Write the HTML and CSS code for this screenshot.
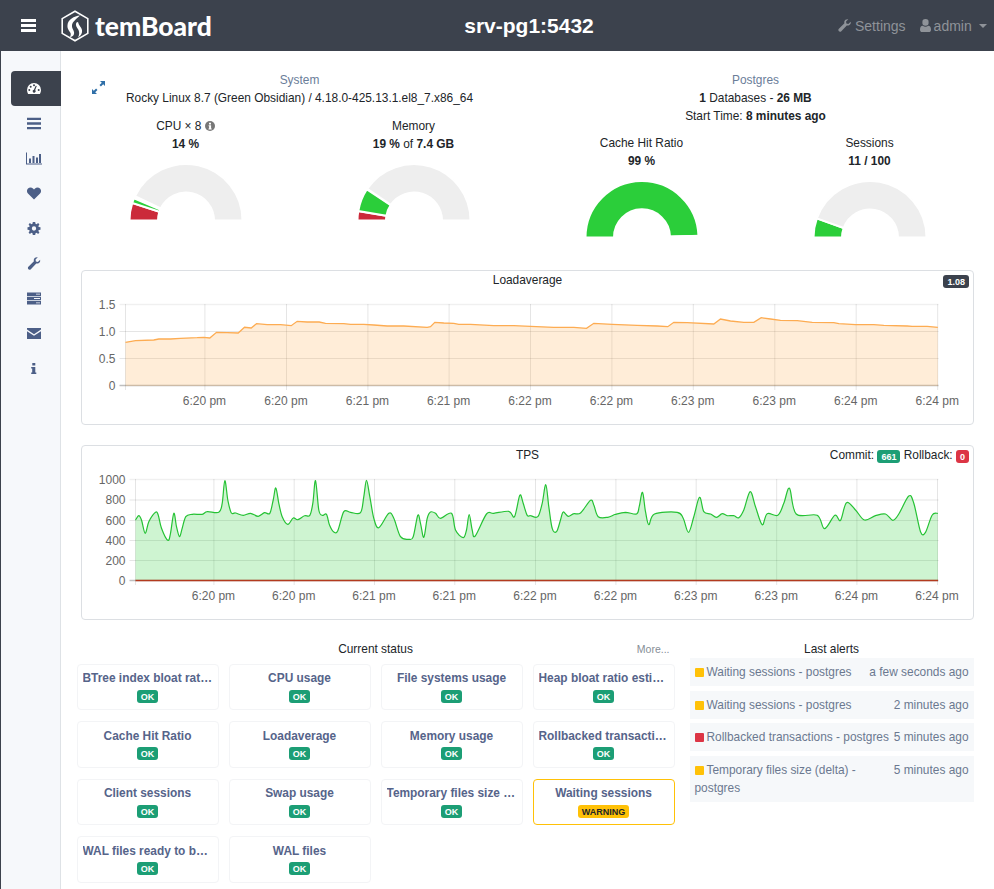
FILE: index.html
```html
<!DOCTYPE html>
<html lang="en">
<head>
  <meta charset="UTF-8">
  <title>temBoard - srv-pg1:5432</title>
  <meta name="viewport" content="width=device-width, initial-scale=1">
  <link rel="stylesheet" href="styles.css">
</head>
<body>

<nav class="navbar">
  <div class="nav-left">
    <svg class="burger" viewBox="0 0 15 13"><path d="M0 0h15v3H0zM0 5h15v3H0zM0 10h15v3H0z"/></svg>
    <svg class="logo" viewBox="0 0 28 32">
      <path class="logo-hex" d="M14 1.2 26.8 8.6v14.8L14 30.8 1.2 23.400V8.600z"/>
      <path class="logo-bird" d="M19 5.500C13 6 7 9.500 6.500 15 6 19 8.500 21 9.500 23c.5 1.500 0 3-.5 4 3 0 4.500-2.500 4-5-.5-2.500-2.500-4-2-7 .5-3 3.500-5.500 8-9.500zM15.500 12.500c-1.500 3 .5 5 2 7.500 1 2 1 5-.5 7.500 3-1.500 4.500-4.500 4-7.500-.5-3-3.500-4.500-4-8z"/>
    </svg>
    <span class="brand">temBoard</span>
  </div>
  <div class="nav-title">srv-pg1:5432</div>
  <div class="nav-right">
    <span class="nav-link">
      <svg class="nav-icon" viewBox="0 0 16 16"><use href="#i-wrench"/></svg>Settings
    </span>
    <span class="nav-link">
      <svg class="nav-icon user" viewBox="0 0 12 14"><path d="M6 0a3.400 3.400 0 0 1 3.400 3.600A3.400 3.400 0 0 1 6 7.200a3.400 3.400 0 0 1-3.400-3.600A3.400 3.400 0 0 1 6 0zM3 7.200c.8.700 1.900 1.100 3 1.100s2.200-.4 3-1.100c1.900.1 3 1.600 3 4.300 0 1.600-1 2.500-2.300 2.500H2.300C1 14 0 13.100 0 11.500c0-2.700 1.100-4.200 3-4.300z"/></svg>admin
      <i class="caret"></i>
    </span>
  </div>
</nav>

<svg class="defs" width="0" height="0">
  <symbol id="i-wrench" viewBox="0 0 16 16">
    <path d="M15.600 3.300c.3.900.2 2.200-.6 3.300-1 1.300-2.700 1.800-4.200 1.300L4.100 15c-.9.900-2.200.9-3 .1-.9-.9-.9-2.200 0-3L7.900 5.300C7.400 3.700 7.900 2.100 9.200 1 10.300.2 11.600 0 12.700.4L9.900 3.100l.4 2.400 2.400.5z"/>
  </symbol>
</svg>

<div class="layout">
  <aside class="sidebar">
    <a class="side-item active">
      <svg class="side-icon" viewBox="0 0 14 11"><path d="M7 0a7 7 0 0 1 7 7c0 1.500-.4 2.800-1.100 4H1.100C.4 9.800 0 8.500 0 7a7 7 0 0 1 7-7z"/><g class="dots"><circle cx="2.300" cy="7" r="1"/><circle cx="3.700" cy="3.700" r="1"/><circle cx="7" cy="2.300" r="1"/><circle cx="11.700" cy="7" r="1"/><path d="M9.800 3 8.200 7.100a1.500 1.500 0 1 1-1.300-.4L8.700 2.700z"/></g></svg>
    </a>
    <a class="side-item"><svg class="side-icon" viewBox="0 0 12 10"><path d="M0 0h12v2H0zM0 4h12v2H0zM0 8h12v2H0z"/></svg></a>
    <a class="side-item"><svg class="side-icon wide" viewBox="0 0 16 12"><path d="M0 0h1v11h15v1H0zM3 6h2v4.500H3zM6.500 3.500h2v7h-2zM10 5h2v5.500h-2zM13 1.500h2v9h-2z"/></svg></a>
    <a class="side-item"><svg class="side-icon" viewBox="0 0 14 12"><path d="M7 12 1.200 6.300C-.4 4.700-.4 2.300 1 1 2.400-.3 4.600-.3 6 1l1 1 1-1c1.400-1.300 3.600-1.300 5 0 1.400 1.300 1.400 3.700-.2 5.300z"/></svg></a>
    <a class="side-item"><svg class="side-icon" viewBox="0 0 12 12"><path fill-rule="evenodd" d="M4.900 0h2.200l.3 1.600 1 .4L9.800 1l1.200 1.200L10 3.600l.4 1 1.600.3v2.200l-1.600.3-.4 1 1 1.400L9.800 11l-1.400-1-1 .4L7.100 12H4.900l-.3-1.600-1-.4-1.400 1L1 9.800l1-1.400-.4-1L0 7.100V4.900l1.600-.3.4-1L1 2.200 2.200 1l1.400 1 1-.4zM6 4a2 2 0 1 0 0 4 2 2 0 0 0 0-4z"/></svg></a>
    <a class="side-item"><svg class="side-icon" viewBox="0 0 16 16"><use href="#i-wrench"/></svg></a>
    <a class="side-item"><svg class="side-icon" viewBox="0 0 14 12"><path d="M0 0h14v3.400H0zM0 4.300h14v3.400H0zM0 8.600h14V12H0z"/><path class="cut" d="M9 1.300h4v.8H9zM7 5.600h6v.8H7zM9 9.900h4v.8H9z"/></svg></a>
    <a class="side-item"><svg class="side-icon" viewBox="0 0 14 11"><path d="M0 0h14v1.600L7 6.200 0 1.600zM0 3.300l7 4.500 7-4.500V11H0z"/></svg></a>
    <a class="side-item"><svg class="side-icon" viewBox="0 0 14 11"><path d="M5.300 0h3v2.400h-3zM4.200 4h4.100v5.500h1V11H4.200V9.500h1V5.500h-1z"/></svg></a>
  </aside>

  <main class="content">
    <section class="overview">
      <div class="overview-col">
        <svg class="expand" viewBox="0 0 13 13"><path d="M8 0h5v5l-1.800-1.800-2.300 2.300-1.400-1.400 2.300-2.300zM5 13H0V8l1.800 1.800 2.300-2.300 1.400 1.400-2.300 2.300z"/></svg>
        <div class="overview-head">
          <a class="section-link">System</a>
          <div>Rocky Linux 8.7 (Green Obsidian) / 4.18.0-425.13.1.el8_7.x86_64</div>
        </div>
        <div class="gauges">
          <div class="gauge">
            <div>CPU × 8 <svg class="hint" viewBox="0 0 10 10"><circle cx="5" cy="5" r="5"/><path d="M4 1.800h2v1.600H4zM3.600 4.300h2.500v3.100h.6v1H3.500v-1h.6V5.300h-.5z"/></svg></div>
            <b>14 %</b>
            <svg class="dial" id="gauge-cpu" viewBox="0 0 228 80"></svg>
          </div>
          <div class="gauge">
            <div>Memory</div>
            <div><b>19 %</b> of <b>7.4 GB</b></div>
            <svg class="dial" id="gauge-memory" viewBox="0 0 228 80"></svg>
          </div>
        </div>
      </div>
      <div class="overview-col">
        <div class="overview-head">
          <a class="section-link">Postgres</a>
          <div><b>1</b> Databases - <b>26 MB</b></div>
          <div>Start Time: <b>8 minutes ago</b></div>
        </div>
        <div class="gauges lower">
          <div class="gauge">
            <div>Cache Hit Ratio</div>
            <b>99 %</b>
            <svg class="dial" id="gauge-cache" viewBox="0 0 228 80"></svg>
          </div>
          <div class="gauge">
            <div>Sessions</div>
            <b>11 / 100</b>
            <svg class="dial" id="gauge-sessions" viewBox="0 0 228 80"></svg>
          </div>
        </div>
      </div>
    </section>

    <section class="chart-card">
      <div class="chart-head">
        <span></span>
        <span class="chart-title">Loadaverage</span>
        <span class="chart-legend"><span class="badge dark">1.08</span></span>
      </div>
      <svg class="chart load" id="chart-load" viewBox="82 289 890 135"></svg>
    </section>

    <section class="chart-card">
      <div class="chart-head">
        <span></span>
        <span class="chart-title">TPS</span>
        <span class="chart-legend">Commit: <span class="badge ok">661</span> Rollback: <span class="badge red">0</span></span>
      </div>
      <svg class="chart tps" id="chart-tps" viewBox="82 464 890 155"></svg>
    </section>

    <section class="bottom">
      <div class="status">
        <div class="status-head">
          <span class="status-title">Current status</span>
          <a class="more">More...</a>
        </div>
        <div class="status-grid">
          <a class="check"><span class="check-name">BTree index bloat ratio estimation</span><span class="badge ok">OK</span></a>
          <a class="check"><span class="check-name">CPU usage</span><span class="badge ok">OK</span></a>
          <a class="check"><span class="check-name">File systems usage</span><span class="badge ok">OK</span></a>
          <a class="check"><span class="check-name">Heap bloat ratio estimation</span><span class="badge ok">OK</span></a>
          <a class="check"><span class="check-name">Cache Hit Ratio</span><span class="badge ok">OK</span></a>
          <a class="check"><span class="check-name">Loadaverage</span><span class="badge ok">OK</span></a>
          <a class="check"><span class="check-name">Memory usage</span><span class="badge ok">OK</span></a>
          <a class="check"><span class="check-name">Rollbacked transactions</span><span class="badge ok">OK</span></a>
          <a class="check"><span class="check-name">Client sessions</span><span class="badge ok">OK</span></a>
          <a class="check"><span class="check-name">Swap usage</span><span class="badge ok">OK</span></a>
          <a class="check"><span class="check-name">Temporary files size (delta)</span><span class="badge ok">OK</span></a>
          <a class="check warning"><span class="check-name">Waiting sessions</span><span class="badge warn">WARNING</span></a>
          <a class="check"><span class="check-name">WAL files ready to be archived</span><span class="badge ok">OK</span></a>
          <a class="check"><span class="check-name">WAL files</span><span class="badge ok">OK</span></a>
        </div>
      </div>
      <div class="alerts">
        <div class="alerts-title">Last alerts</div>
        <div class="alert"><span class="when">a few seconds ago</span><i class="square yellow"></i>Waiting sessions - postgres</div>
        <div class="alert"><span class="when">2 minutes ago</span><i class="square yellow"></i>Waiting sessions - postgres</div>
        <div class="alert"><span class="when">5 minutes ago</span><i class="square crimson"></i>Rollbacked transactions - postgres</div>
        <div class="alert"><span class="when">5 minutes ago</span><i class="square yellow"></i>Temporary files size (delta) - postgres</div>
      </div>
    </section>
  </main>
</div>

<script src="charts.js"></script>
</body>
</html>
```

FILE: styles.css
```css
* {
  box-sizing: border-box;
}

body {
  margin: 0;
  font-family: "Liberation Sans", Arial, sans-serif;
  font-size: 11.9px;
  line-height: 18px;
  color: #212529;
  background: #fff;
}

.defs {
  position: absolute;
}

/* top bar */
.navbar {
  display: flex;
  align-items: center;
  height: 51px;
  background: #3c424d;
  color: #fff;
}

.nav-left {
  display: flex;
  align-items: center;
  width: 225px;
  padding-left: 21px;
}

.burger {
  width: 15px;
  height: 13px;
  fill: #fff;
}

.logo {
  width: 28px;
  height: 32px;
  margin-left: 25px;
}

.logo-hex {
  fill: none;
  stroke: #fff;
  stroke-width: 1.6;
}

.logo-bird {
  fill: #fff;
}

.brand {
  margin-left: 6px;
  font-family: Lato, sans-serif;
  font-size: 26.400px;
  font-weight: 900;
}

.nav-title {
  flex: 1;
  text-align: center;
  font-size: 21px;
  font-weight: bold;
}

.nav-right {
  display: flex;
  width: 161px;
  padding-left: 5px;
  gap: 14px;
  font-size: 14px;
  color: #8f9399;
}

.nav-link {
  display: flex;
  align-items: center;
}

.nav-icon {
  width: 13px;
  height: 13px;
  margin-right: 4px;
  fill: #8f9399;
}

.nav-icon.user {
  width: 11px;
  margin-right: 3px;
}

.caret {
  margin-left: 7px;
  border-top: 4px solid #8f9399;
  border-left: 4px solid transparent;
  border-right: 4px solid transparent;
}

/* side menu */
.layout {
  display: flex;
  min-height: 838px;
}

.sidebar {
  flex: none;
  width: 61px;
  padding: 20px 0 0 10px;
  background: #f6f8fb;
  border-left: 1px solid #3c424d;
  border-right: 1px solid #dee2e6;
}

.side-item {
  display: flex;
  align-items: center;
  justify-content: center;
  width: 50px;
  height: 35px;
  padding-right: 4px;
  border-radius: 4px 0 0 4px;
}

.side-item.active {
  background: #3c424d;
}

.side-icon {
  width: 14px;
  height: 13px;
  fill: #4c5f87;
}

.side-icon.wide {
  width: 16px;
}

.active .side-icon {
  fill: #fff;
}

.dots {
  fill: #3c424d;
}

.cut {
  fill: #f6f8fb;
}

/* main column */
.content {
  flex: 1;
  min-width: 0;
  padding: 20px 10.5px 0;
}

.overview {
  display: grid;
  grid-template-columns: 1fr 1fr;
  margin-bottom: 20px;
}

.overview-col {
  position: relative;
  text-align: center;
}

.expand {
  position: absolute;
  left: 20px;
  top: 10px;
  width: 13px;
  height: 13px;
  fill: #2f6fa8;
}

.section-link {
  display: block;
  color: #6a7d99;
}

.gauges {
  display: grid;
  grid-template-columns: 1fr 1fr;
  margin-top: 10px;
}

.gauges.lower {
  margin-top: 9px;
}

.gauge > b {
  display: block;
}

.hint {
  width: 10px;
  height: 10px;
  vertical-align: -1px;
  fill: #777;
  fill-rule: evenodd;
}

.hint path {
  fill: #fff;
}

.dial {
  display: block;
  width: 228px;
  height: 80px;
}

.chart-card {
  margin: 0 9.5px 20px;
  border: 1px solid #dcdfe3;
  border-radius: 4px;
}

.chart-head {
  display: grid;
  grid-template-columns: 1fr auto 1fr;
  padding: 0 4px;
}

.chart-legend {
  text-align: right;
}

.chart {
  display: block;
  width: 100%;
}

.chart.load {
  height: 135px;
}

.chart.tps {
  height: 155px;
}

.chart text {
  font-size: 12px;
  fill: #666;
}

.badge {
  display: inline-block;
  padding: 0 4px;
  height: 13px;
  border-radius: 3px;
  font-size: 9px;
  line-height: 14px;
  font-weight: bold;
  color: #fff;
  vertical-align: -1px;
}

.badge.ok {
  background: #1c9e75;
}

.badge.dark {
  background: #3c424d;
}

.badge.red {
  background: #dc3545;
}

.badge.warn {
  background: #ffc107;
  color: #212529;
}

/* status checks and alerts */
.bottom {
  display: grid;
  grid-template-columns: 608px minmax(0, 1fr);
}

.status {
  min-width: 0;
  padding: 0 5px;
}

.status-head {
  position: relative;
  text-align: center;
}

.more {
  position: absolute;
  right: 5px;
  top: 0;
  font-size: 10.5px;
  color: #868e96;
}

.status-grid {
  display: grid;
  grid-template-columns: repeat(4, minmax(0, 1fr));
  column-gap: 10px;
  row-gap: 11px;
  margin-top: 5.500px;
}

.check {
  display: flex;
  flex-direction: column;
  align-items: center;
  min-width: 0;
  height: 46.500px;
  padding: 4.500px 5px 0;
  border: 1px solid #f3f4f6;
  border-radius: 4px;
}

.check.warning {
  border-color: #ffc107;
}

.check-name {
  width: 100%;
  margin-bottom: 2.500px;
  overflow: hidden;
  white-space: nowrap;
  text-overflow: ellipsis;
  text-align: center;
  font-weight: bold;
  color: #56648a;
}

.alerts {
  padding: 0 10px;
}

.alerts-title {
  text-align: center;
}

.alert {
  margin-bottom: 4.700px;
  padding: 5px;
  background: #f6f8fa;
  color: #6b7890;
}

.when {
  float: right;
}

.square {
  display: inline-block;
  width: 9px;
  height: 9px;
  margin-right: 3px;
  border-radius: 1px;
  vertical-align: -1px;
}

.square.yellow {
  background: #ffc107;
}

.square.crimson {
  background: #dc3545;
}
```

FILE: charts.js
```js
const NS = "http://www.w3.org/2000/svg";

function add(svg, tag, attrs, text) {
  const el = document.createElementNS(NS, tag);
  for (const k in attrs) el.setAttribute(k, attrs[k]);
  if (text) el.textContent = text;
  svg.appendChild(el);
}

// half doughnut, angles in degrees from the left end
function gauge(id, segments) {
  const svg = document.getElementById(id);
  const cx = 114, cy = 67.5, R = 56.5, r = 28;
  const pt = (rad, a) => {
    const t = a * Math.PI / 180;
    return (cx - rad * Math.cos(t)).toFixed(2) + " " + (cy - rad * Math.sin(t)).toFixed(2);
  };
  segments.forEach(([a0, a1, color]) => {
    const d = `M${pt(R, a0)}A${R} ${R} 0 0 1 ${pt(R, a1)}L${pt(r, a1)}A${r} ${r} 0 0 0 ${pt(r, a0)}Z`;
    add(svg, "path", { d, fill: color, stroke: "#fff", "stroke-width": 2 });
  });
}

const RED = "#cb2a3a", GREEN = "#2bce3a", GREY = "#eeeeee";
gauge("gauge-cpu", [[0, 18, RED], [18.2, 23, GREEN], [25.5, 180, GREY]]);
gauge("gauge-memory", [[0, 9.6, RED], [9.6, 33.5, GREEN], [34.2, 180, GREY]]);
gauge("gauge-cache", [[0, 178.2, GREEN], [178.2, 180, GREY]]);
gauge("gauge-sessions", [[0, 19.8, GREEN], [19.8, 180, GREY]]);

function drawAxes(svg, a) {
  const last = a.yTicks.length - 1;
  a.yTicks.forEach(([label, y], i) => {
    const stroke = i === last ? "rgba(0,0,0,.25)" : i === 0 ? "rgba(0,0,0,.06)" : "rgba(0,0,0,.1)";
    add(svg, "line", { x1: a.left - 6, x2: a.right, y1: y, y2: y, stroke, "stroke-width": i === 0 || i === last ? 1.6 : 1 });
    add(svg, "text", { x: a.labelX, y: y + 4, "text-anchor": "end" }, label);
  });
  a.xTicks.forEach(([label, x]) => {
    add(svg, "line", { x1: x, x2: x, y1: a.top, y2: a.bottom + 4, stroke: "rgba(0,0,0,.1)", "stroke-width": 1 });
    if (label) add(svg, "text", { x: x - 0.5, y: a.bottom + 19, "text-anchor": "middle" }, label);
  });
}

// smooth line through the points, like a chart with bezier tension
function smooth(p) {
  let d = `M${p[0][0]} ${p[0][1]}`;
  for (let i = 0; i < p.length - 1; i++) {
    const a = p[Math.max(i - 1, 0)], b = p[i], c = p[i + 1], e = p[Math.min(i + 2, p.length - 1)];
    const c1 = [b[0] + (c[0] - a[0]) / 6, b[1] + (c[1] - a[1]) / 6];
    const c2 = [c[0] - (e[0] - b[0]) / 6, c[1] - (e[1] - b[1]) / 6];
    d += `C${c1[0].toFixed(1)} ${c1[1].toFixed(1)} ${c2[0].toFixed(1)} ${c2[1].toFixed(1)} ${c[0].toFixed(1)} ${c[1].toFixed(1)}`;
  }
  return d;
}

function straight(p) {
  return "M" + p.map(q => q[0].toFixed(1) + " " + q[1].toFixed(1)).join("L");
}

// points were read at 3x, [x, y] from a given origin
function scale(list, ox, oy) {
  const out = [];
  for (let i = 0; i < list.length; i += 2) out.push([ox + list[i] / 3, oy + list[i + 1] / 3]);
  return out;
}

// Loadaverage
const loadPts = scale([135,232,165,227,220,225,235,222,270,222,300,220,350,218,370,217,388,219,408,202,440,203,473,204,492,187,512,189,528,176,560,179,600,179,632,182,650,169,680,171,716,171,735,175,790,176,810,178,850,178,880,180,920,183,970,183,1040,187,1050,185,1063,172,1090,174,1120,175,1135,178,1170,178,1240,182,1300,182,1350,184], 80, 265)
  .concat(scale([70,187,130,187,168,190,190,175,245,178,320,181,380,183,412,185,430,172,470,173,550,177,570,162,600,168,640,172,670,172,692,158,720,162,750,166,800,167,845,172,910,173,925,176,975,179,1030,179,1060,181,1130,183,1145,184,1190,184,1222,187], 530, 265));

const loadSvg = document.getElementById("chart-load");
drawAxes(loadSvg, {
  left: 125, right: 938, top: 304, bottom: 386, labelX: 115,
  yTicks: [["1.5", 304.5], ["1.0", 331.5], ["0.5", 358.5], ["0", 385.5]],
  xTicks: [["", 125], ["6:20 pm", 204.4], ["6:20 pm", 286], ["6:21 pm", 367.4], ["6:21 pm", 448.6], ["6:22 pm", 530], ["6:22 pm", 611.4], ["6:23 pm", 692.8], ["6:23 pm", 774.3], ["6:24 pm", 855.7], ["6:24 pm", 937.2]]
});
add(loadSvg, "path", { d: straight(loadPts) + "L937.5 386L125 386Z", fill: "rgba(253,171,78,.22)" });
add(loadSvg, "path", { d: straight(loadPts), fill: "none", stroke: "#fdac52", "stroke-width": 1.3 });

// TPS
const tpsPts = scale([165,240,175,227,183,240,194,280,205,245,225,217,233,225,243,265,262,301,270,280,280,220,288,260,297,290,305,265,316,230,335,223,365,223,380,215,415,217,425,190,433,122,442,180,452,218,465,219,488,226,510,220,533,229,552,218,568,220,578,180,586,144,595,190,605,230,622,253,638,234,652,239,672,227,688,226,697,190,705,122,715,210,725,226,738,223,747,255,760,276,772,272,790,215,810,217,840,218,850,170,858,121,868,170,880,235,895,263,925,220,940,235,960,290,985,298,998,290,1012,226,1020,250,1030,292,1040,235,1050,216,1065,220,1080,235,1113,220,1125,270,1148,293,1158,270,1166,224,1175,270,1184,288,1218,222,1240,220,1285,214,1302,230,1318,166,1328,190,1340,226,1350,227], 80, 440)
  .concat(scale([22,230,35,190,46,134,55,200,65,265,78,275,90,240,98,216,113,229,130,221,150,219,180,181,190,195,203,230,232,232,255,223,285,217,318,222,326,200,336,157,345,215,355,254,372,222,440,217,458,235,474,277,490,230,507,172,520,215,540,222,558,232,575,221,590,227,610,227,625,233,640,210,659,155,675,200,695,254,710,221,742,226,760,190,777,145,797,222,860,226,882,266,913,226,930,241,948,188,975,210,1002,240,1035,227,1065,222,1087,241,1105,222,1135,168,1150,190,1170,275,1185,277,1205,225,1222,220], 530, 440));

const tpsSvg = document.getElementById("chart-tps");
drawAxes(tpsSvg, {
  left: 135, right: 938, top: 479, bottom: 581, labelX: 125,
  yTicks: [["1000", 479.5], ["800", 500], ["600", 520.5], ["400", 540.5], ["200", 560.5], ["0", 580.5]],
  xTicks: [["", 135], ["6:20 pm", 213.4], ["6:20 pm", 293.7], ["6:21 pm", 374], ["6:21 pm", 454.3], ["6:22 pm", 535], ["6:22 pm", 615.4], ["6:23 pm", 695.7], ["6:23 pm", 776.2], ["6:24 pm", 856.4], ["6:24 pm", 937]]
});
add(tpsSvg, "path", { d: smooth(tpsPts) + "L937.5 580.5L135 580.5Z", fill: "rgba(43,206,58,.23)" });
add(tpsSvg, "path", { d: smooth(tpsPts), fill: "none", stroke: "#25c234", "stroke-width": 1.2 });
add(tpsSvg, "line", { x1: 135, x2: 937.5, y1: 580.5, y2: 580.5, stroke: "#b33a1e", "stroke-width": 1.6 });
```
